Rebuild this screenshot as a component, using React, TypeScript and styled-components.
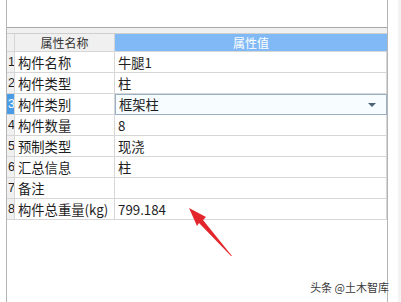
import React from "react";
import styled, { createGlobalStyle } from "styled-components";

const Global = createGlobalStyle`
  html, body { margin: 0; padding: 0; background: #ffffff; }
  body { font-family: "Noto Sans CJK SC", "Noto Sans", sans-serif; }
`;

const Page = styled.div`
  position: relative;
  width: 401px;
  height: 302px;
  overflow: hidden;
  background: #ffffff;
  border-right: 3px solid #f3f3f3;
  box-sizing: border-box;
`;

const Frame = styled.div`
  margin-left: 6px;
  width: 382px;
  height: 302px;
  box-sizing: border-box;
  border-left: 1px solid #b4b4b4;
  border-right: 1px solid #b4b4b4;
  display: flex;
  flex-direction: column;
`;

const TopPanel = styled.div`
  height: 28px;
  box-sizing: border-box;
  border-bottom: 1px solid #a8a8a8;
  background: #ffffff;
`;

const Strip = styled.div`
  height: 5px;
  background: #f0f0f0;
`;

const Grid = styled.div`
  display: grid;
  grid-template-columns: 8px 100px 1fr;
  grid-auto-rows: 21px;
  grid-template-rows: 18px;
  border-top: 1px solid #cfcfcf;
  font-size: 13.3px;
  color: #1e1e1e;
`;

const Cell = styled.div<{ $head?: boolean; $blue?: boolean; $num?: boolean; $sel?: boolean; $edit?: boolean }>`
  box-sizing: border-box;
  border-right: 1px solid #d6d6d6;
  border-bottom: 1px solid #d6d6d6;
  display: flex;
  align-items: center;
  white-space: nowrap;
  overflow: hidden;
  padding-left: ${(p) => (p.$num ? "1px" : "3px")};
  background: ${(p) =>
    p.$blue ? "#80b9f6" : p.$sel ? "#4a9be6" : p.$head || p.$num ? "#f0f0f0" : p.$edit ? "#f6fcff" : "#ffffff"};
  color: ${(p) => (p.$blue || p.$sel ? "#ffffff" : "#1e1e1e")};
  ${(p) => (p.$head ? "justify-content: center; font-size: 12px; padding-left: 0; color: #333;" : "")}
  ${(p) => (p.$blue ? "justify-content: center; font-size: 12px; padding-left: 0; color: #ffffff; border-right: none;" : "")}
  ${(p) => (p.$num ? "font-size: 12.5px; font-family: 'Liberation Sans', sans-serif;" : "")}
  ${(p) =>
    p.$edit
      ? "border: 1px solid #9bb0c4; justify-content: space-between; padding-right: 10px;"
      : ""}
`;

const Caret = styled.span`
  width: 0;
  height: 0;
  border-left: 4px solid transparent;
  border-right: 4px solid transparent;
  border-top: 4px solid #4d6272;
`;

const Watermark = styled.div`
  position: absolute;
  right: 9px;
  bottom: 7px;
  font-size: 11px;
  color: #3a3a3a;
  text-shadow: 0 0 2px #fff, 0 0 2px #fff;
`;

const Overlay = styled.svg`
  position: absolute;
  left: 0;
  top: 0;
  pointer-events: none;
`;

const rows: [string, string][] = [
  ["构件名称", "牛腿1"],
  ["构件类型", "柱"],
  ["构件类别", "框架柱"],
  ["构件数量", "8"],
  ["预制类型", "现浇"],
  ["汇总信息", "柱"],
  ["备注", ""],
  ["构件总重量(kg)", "799.184"],
];

export default function App() {
  return (
    <>
      <Global />
      <Page>
        <Frame>
          <TopPanel />
          <Strip />
          <Grid>
            <Cell $num />
            <Cell $head>属性名称</Cell>
            <Cell $blue>属性值</Cell>
            {rows.map(([k, v], i) => {
              const sel = i === 2;
              return (
                <React.Fragment key={k}>
                  <Cell $num $sel={sel}>{i + 1}</Cell>
                  <Cell>{k}</Cell>
                  {sel ? (
                    <Cell $edit>
                      {v}
                      <Caret />
                    </Cell>
                  ) : (
                    <Cell>{v}</Cell>
                  )}
                </React.Fragment>
              );
            })}
          </Grid>
        </Frame>
        <Overlay width="401" height="302" viewBox="0 0 401 302">
          <polygon
            points="189,208 206,217 203,220 232,256 231,256 199,223 197,226"
            fill="#e3262b"
          />
        </Overlay>
        <Watermark>头条 @土木智库</Watermark>
      </Page>
    </>
  );
}
